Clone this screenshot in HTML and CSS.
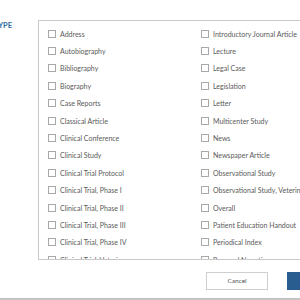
FILE: index.html
```html
<!DOCTYPE html>
<html>
<head>
<meta charset="utf-8">
<link rel="stylesheet" href="styles.css">
</head>
<body>
<div class="page">
  <div class="main">
    <div class="label-col"><span class="label">PUBLICATION TYPE</span></div>
    <div class="box">
      <div class="col">
        <div class="row"><span class="cb"></span><span>Address</span></div>
        <div class="row"><span class="cb"></span><span>Autobiography</span></div>
        <div class="row"><span class="cb"></span><span>Bibliography</span></div>
        <div class="row"><span class="cb"></span><span>Biography</span></div>
        <div class="row"><span class="cb"></span><span>Case Reports</span></div>
        <div class="row"><span class="cb"></span><span>Classical Article</span></div>
        <div class="row"><span class="cb"></span><span>Clinical Conference</span></div>
        <div class="row"><span class="cb"></span><span>Clinical Study</span></div>
        <div class="row"><span class="cb"></span><span>Clinical Trial Protocol</span></div>
        <div class="row"><span class="cb"></span><span>Clinical Trial, Phase I</span></div>
        <div class="row"><span class="cb"></span><span>Clinical Trial, Phase II</span></div>
        <div class="row"><span class="cb"></span><span>Clinical Trial, Phase III</span></div>
        <div class="row"><span class="cb"></span><span>Clinical Trial, Phase IV</span></div>
        <div class="row"><span class="cb"></span><span>Clinical Trial, Veterinary</span></div>
      </div>
      <div class="col">
        <div class="row"><span class="cb"></span><span>Introductory Journal Article</span></div>
        <div class="row"><span class="cb"></span><span>Lecture</span></div>
        <div class="row"><span class="cb"></span><span>Legal Case</span></div>
        <div class="row"><span class="cb"></span><span>Legislation</span></div>
        <div class="row"><span class="cb"></span><span>Letter</span></div>
        <div class="row"><span class="cb"></span><span>Multicenter Study</span></div>
        <div class="row"><span class="cb"></span><span>News</span></div>
        <div class="row"><span class="cb"></span><span>Newspaper Article</span></div>
        <div class="row"><span class="cb"></span><span>Observational Study</span></div>
        <div class="row"><span class="cb"></span><span>Observational Study, Veterinary</span></div>
        <div class="row"><span class="cb"></span><span>Overall</span></div>
        <div class="row"><span class="cb"></span><span>Patient Education Handout</span></div>
        <div class="row"><span class="cb"></span><span>Periodical Index</span></div>
        <div class="row"><span class="cb"></span><span>Personal Narrative</span></div>
      </div>
    </div>
  </div>
  <div class="footer">
    <button class="btn cancel">Cancel</button>
    <button class="btn primary">Apply</button>
  </div>
  <div class="bottom-bar"></div>
</div>
</body>
</html>
```
FILE: styles.css
```css
html, body {
  margin: 0;
  padding: 0;
  background: #fff;
}
body {
  width: 300px;
  height: 300px;
  overflow: hidden;
  font-family: Lato, "Open Sans", sans-serif;
  color: #5a5a5a;
}
.page {
  width: 300px;
  height: 300px;
  overflow: hidden;
  display: flex;
  flex-direction: column;
}
.main {
  display: flex;
  padding-top: 20px;
  height: 240px;
  flex: none;
}
.label-col {
  width: 12px;
  flex: none;
  display: flex;
  justify-content: flex-end;
  padding-top: 1px;
}
.label {
  white-space: nowrap;
  font-size: 7.5px;
  font-weight: 700;
  color: #2e6da4;
  line-height: 10px;
}
.box {
  margin-left: 26px;
  width: 420px;
  flex: none;
  height: 240px;
  box-sizing: border-box;
  border: 1px solid #c8c8c8;
  overflow: hidden;
  display: flex;
  padding: 4px 0 0 9px;
}
.col {
  width: 153px;
  flex: none;
  display: flex;
  flex-direction: column;
}
.row {
  height: 17.4px;
  flex: none;
  display: flex;
  align-items: center;
  gap: 4px;
  font-size: 7px;
  white-space: nowrap;
}
.cb {
  width: 8px;
  height: 8px;
  box-sizing: border-box;
  border: 1px solid #a8a8a8;
  background: #fff;
  flex: none;
}
.footer {
  height: 38px;
  flex: none;
  display: flex;
  align-items: center;
  gap: 19px;
  padding-left: 206px;
  box-sizing: border-box;
}
.btn {
  height: 18px;
  width: 62px;
  flex: none;
  font-family: Lato, "Open Sans", sans-serif;
  font-size: 6.5px;
  padding: 0;
  box-sizing: border-box;
  border-radius: 0;
  margin-top: 3px;
}
.cancel {
  background: #fff;
  border: 1px solid #cfcfcf;
  color: #555;
}
.primary {
  background: #2a5d8f;
  border: 1px solid #2a5d8f;
  color: #fff;
}
.bottom-bar {
  flex: 1;
  background: #c4c4c4;
}
```
